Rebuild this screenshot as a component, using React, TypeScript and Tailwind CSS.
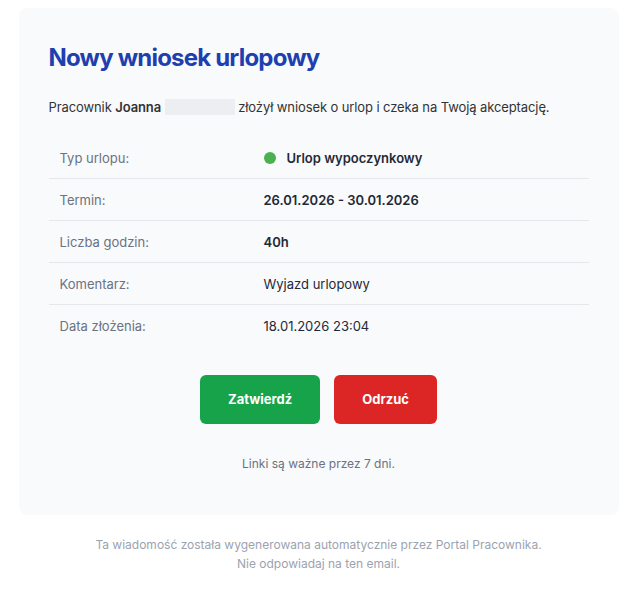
import React from "react";

const rows: { label: string; value: React.ReactNode }[] = [
  {
    label: "Typ urlopu:",
    value: (
      <span className="flex items-center gap-[11px] font-semibold text-[#1f2937]">
        <span className="inline-block h-[12px] w-[12px] rounded-full bg-[#4caf50]" />
        Urlop wypoczynkowy
      </span>
    ),
  },
  { label: "Termin:", value: <span className="font-semibold text-[#1f2937]">26.01.2026 - 30.01.2026</span> },
  { label: "Liczba godzin:", value: <span className="font-semibold text-[#1f2937]">40h</span> },
  { label: "Komentarz:", value: <span className="text-[#1f2937]">Wyjazd urlopowy</span> },
  { label: "Data złożenia:", value: <span className="text-[#1f2937]">18.01.2026 23:04</span> },
];

export default function App() {
  return (
    <div
      className="min-h-[604px] w-full bg-white pt-[8px]"
      style={{ fontFamily: "Inter, 'Noto Sans', 'Liberation Sans', sans-serif" }}
    >
      <div className="mx-auto w-[600px] rounded-[8px] bg-[#f8fafc] px-[30px] pb-[42px] pt-[35px]">
        <h1 className="text-[24px] font-bold leading-[30px] tracking-[-0.8px] text-[#1e40af]">
          Nowy wniosek urlopowy
        </h1>
        <p className="mt-[23px] text-[13px] leading-[20px] tracking-[-0.1px] text-[#333333]">
          Pracownik <span className="font-semibold">Joanna</span>{" "}
          <span className="inline-block h-[16px] w-[70px] translate-y-[3px] bg-[#eceef1]" /> złożył wniosek o urlop i
          czeka na Twoją akceptację.
        </p>
        <div className="mt-[20px] text-[13px] leading-[20px]">
          {rows.map((r, i) => (
            <div
              key={r.label}
              className={`grid h-[42px] grid-cols-[202px_1fr] items-center ${
                i < rows.length - 1 ? "border-b border-[#e5e7eb]" : ""
              }`}
            >
              <span className="pl-[11px] text-[#6b7280]">{r.label}</span>
              <span className="pl-[13px]">{r.value}</span>
            </div>
          ))}
        </div>
        <div className="mt-[28px] flex justify-center gap-[14px]">
          <button className="h-[49px] rounded-[6px] bg-[#16a34a] px-[28px] text-[13px] font-bold text-white">
            Zatwierdź
          </button>
          <button className="h-[49px] rounded-[6px] bg-[#dc2626] px-[28px] text-[13px] font-bold text-white">
            Odrzuć
          </button>
        </div>
        <p className="mt-[31px] text-center text-[12px] leading-[18px] text-[#6b7280]">Linki są ważne przez 7 dni.</p>
      </div>
      <div className="mt-[20px] text-center text-[12px] leading-[19px] text-[#9ca3af]">
        <p>Ta wiadomość została wygenerowana automatycznie przez Portal Pracownika.</p>
        <p>Nie odpowiadaj na ten email.</p>
      </div>
    </div>
  );
}
